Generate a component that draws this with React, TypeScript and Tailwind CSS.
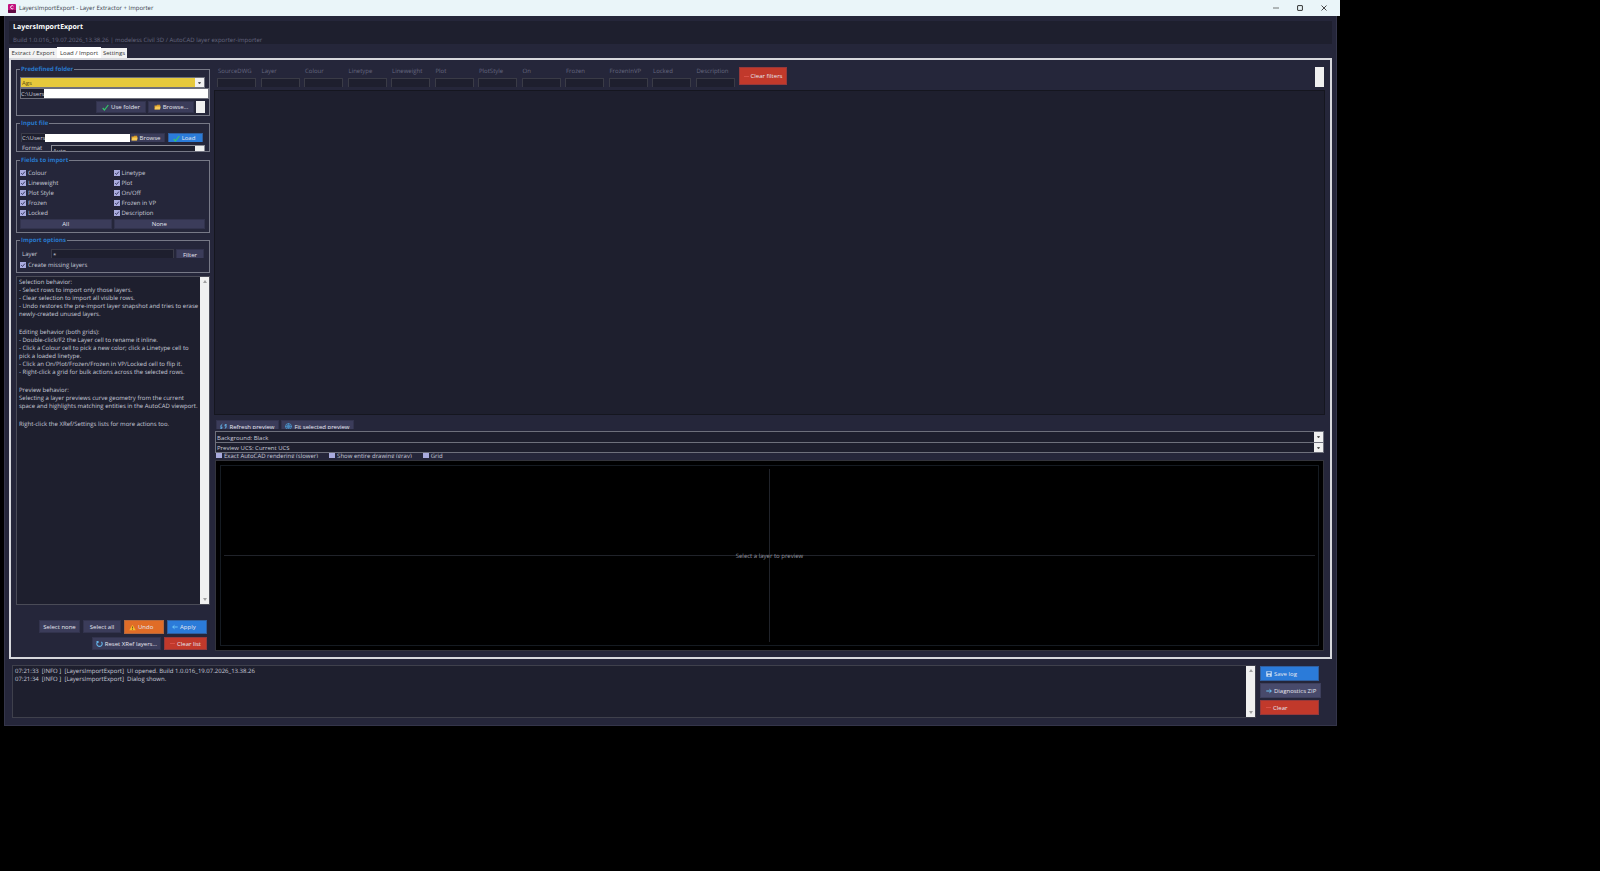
import { useState } from "react";
import type { ReactNode } from "react";
import clsx from "clsx";

const columns = ["SourceDWG", "Layer", "Colour", "Linetype", "Lineweight", "Plot", "PlotStyle", "On", "Frozen", "FrozenInVP", "Locked", "Description"];

const fields = ["Colour", "Linetype", "Lineweight", "Plot", "Plot Style", "On/Off", "Frozen", "Frozen in VP", "Locked", "Description"];

const tabs = [
  { name: "Extract / Export", width: "w-[48px]" },
  { name: "Load / Import", width: "w-[44px]" },
  { name: "Settings", width: "w-[26px]" },
];

const help = [
  ["Selection behavior:", "- Select rows to import only those layers.", "- Clear selection to import all visible rows.", "- Undo restores the pre-import layer snapshot and tries to erase", "newly-created unused layers."],
  ["Editing behavior (both grids):", "- Double-click/F2 the Layer cell to rename it inline.", "- Click a Colour cell to pick a new color; click a Linetype cell to", "pick a loaded linetype.", "- Click an On/Plot/Frozen/Frozen in VP/Locked cell to flip it.", "- Right-click a grid for bulk actions across the selected rows."],
  ["Preview behavior:", "Selecting a layer previews curve geometry from the current", "space and highlights matching entities in the AutoCAD viewport."],
  ["Right-click the XRef/Settings lists for more actions too."],
];

const log = [
  "07:21:33  [INFO ]  [LayersImportExport]  UI opened. Build 1.0.016_19.07.2026_13.38.26",
  "07:21:34  [INFO ]  [LayersImportExport]  Dialog shown.",
];

const tones = {
  plain: "bg-[#3b3c5a] border-[#32334d]",
  light: "bg-[#484a6b] border-[#3d3f5c]",
  blue: "bg-[#2b7bd9] border-[#2f5f9f]",
  red: "bg-[#c1392b] border-[#96383a]",
  orange: "bg-[#e06c27] border-[#b5683d]",
};

function Button({ tone = "plain", icon, className, children }: { tone?: keyof typeof tones; icon?: ReactNode; className?: string; children?: ReactNode }) {
  return (
    <button type="button" className={clsx("flex shrink-0 items-center gap-[2px] overflow-hidden border whitespace-nowrap text-[#e6e7f0]", tones[tone], className)}>
      {icon}
      {children}
    </button>
  );
}

function CheckIcon() {
  return (
    <svg viewBox="0 0 7 7" className="size-[7px] shrink-0" fill="none" stroke="#35c46a" strokeWidth="1.2">
      <path d="M.7 4 2.4 6 6.3 1" />
    </svg>
  );
}

function FolderIcon() {
  return (
    <svg viewBox="0 0 7 6" className="h-[6px] w-[7px] shrink-0">
      <path d="M.5 1.5h2l.7-.8h3v4.6H.5z" fill="#d99a27" />
      <path d="M1.5 2.4h5.2l-.8 3H.5z" fill="#f7cb58" />
    </svg>
  );
}

function WarnIcon() {
  return (
    <svg viewBox="0 0 7 7" className="size-[7px] shrink-0">
      <path d="M3.5.7 6.7 6.3H.3z" fill="#f5bd2c" />
      <path d="M3.5 2.5v2M3.5 5v.7" stroke="#54401c" strokeWidth=".8" />
    </svg>
  );
}

function ArrowIcon({ left = false }: { left?: boolean }) {
  return (
    <svg viewBox="0 0 6 6" className={clsx("size-[6px] shrink-0", left && "rotate-180")} fill="none" stroke="#6cc4f5" strokeWidth="1">
      <path d="M.3 3h5M3.5 1.3 5.3 3 3.5 4.7" />
    </svg>
  );
}

function SpinIcon() {
  return (
    <svg viewBox="0 0 7 7" className="size-[7px] shrink-0" fill="none" stroke="#63b3e8" strokeWidth="1.1">
      <path d="M1.6 1.8A2.7 2.7 0 1 0 5.4 1.8M.5 1.6h1.5v1.3" />
    </svg>
  );
}

function RefreshIcon() {
  return (
    <svg viewBox="0 0 7 7" className="size-[7px] shrink-0" fill="none" stroke="#63b3e8" strokeWidth="1">
      <path d="M2.3 1.2A2.6 2.6 0 0 0 1.5 5.2M.3 5.3h1.6V3.7M4.7 5.8a2.6 2.6 0 0 0 .8-4M6.7 1.7H5.1v1.6" />
    </svg>
  );
}

function TargetIcon() {
  return (
    <svg viewBox="0 0 7 7" className="size-[7px] shrink-0" fill="none" stroke="#4da3de" strokeWidth=".8">
      <circle cx="3.5" cy="3.5" r="2.9" />
      <circle cx="3.5" cy="3.5" r="1.3" />
      <path d="M3.5 0v7M0 3.5h7" strokeWidth=".5" />
    </svg>
  );
}

function DiskIcon() {
  return (
    <svg viewBox="0 0 6 6" className="size-[6px] shrink-0">
      <path d="M.3.3h5.4v5.4H.3z" fill="#d6e6f8" />
      <path d="M1.3.8h3.4v1.7H1.3z" fill="#2b6fc0" />
      <path d="M1.8 3.8h2.4v1.5H1.8z" fill="#4f87c8" />
    </svg>
  );
}

function MinusIcon() {
  return (
    <svg viewBox="0 0 5 5" className="size-[5px] shrink-0" stroke="#e0564b" strokeWidth=".8">
      <path d="M0 2.5h5" />
    </svg>
  );
}

function Check({ label, defaultChecked = false }: { label: string; defaultChecked?: boolean }) {
  return (
    <label className="flex items-center gap-[2px] whitespace-nowrap">
      <span className="grid shrink-0">
        <input type="checkbox" defaultChecked={defaultChecked} className="peer col-start-1 row-start-1 size-[6px] appearance-none bg-[#a9abde]" />
        <svg viewBox="0 0 6 6" className="pointer-events-none invisible col-start-1 row-start-1 size-[6px] peer-checked:visible" fill="none" stroke="#30325a" strokeWidth=".9">
          <path d="M1.2 3.1 2.5 4.5 4.9 1.6" />
        </svg>
      </span>
      {label}
    </label>
  );
}

function Group({ title, className, children }: { title: string; className?: string; children: ReactNode }) {
  return (
    <fieldset className={clsx("min-w-0 overflow-hidden border border-[#777987] pr-1 pl-[3px]", className)}>
      <legend className="px-px leading-[8px] font-bold text-[#2879cc]">{title}</legend>
      {children}
    </fieldset>
  );
}

function Select({ label, value, className }: { label: string; value: string; className?: string }) {
  return (
    <div className={clsx("flex min-w-0 border border-[#6e707c]", className)}>
      <select aria-label={label} className="min-w-0 flex-1 appearance-none px-px pt-px outline-none">
        <option>{value}</option>
      </select>
      <span className="flex w-[9px] shrink-0 items-center justify-center bg-[#f0f0f0]">
        <svg viewBox="0 0 3 2" className="h-[2px] w-[3px]" fill="#555"><path d="M0 0h3L2 2H1z" /></svg>
      </span>
    </div>
  );
}

function ScrollBar() {
  return (
    <div className="flex w-[9px] shrink-0 flex-col items-center justify-between bg-[#f0f0f0] py-[3px]">
      <svg viewBox="0 0 4 3" className="h-[3px] w-[4px]" fill="#a0a0a0"><path d="M0 3 2 0l2 3z" /></svg>
      <svg viewBox="0 0 4 3" className="h-[3px] w-[4px]" fill="#a0a0a0"><path d="M0 0h4L2 3z" /></svg>
    </div>
  );
}

function Sidebar() {
  return (
    <aside className="flex w-[194px] shrink-0 flex-col">
      <Group title="Predefined folder" className="h-[51px]">
        <Select label="Predefined folder" value="Ags" className="mt-[4px] h-[11px] bg-[#e6c93c] text-[#5b4c10]" />
        <div className="-mr-1 flex h-[11px] border border-[#6e707c]">
          <input aria-label="Folder path" defaultValue="C:\Users" className="w-[23px] bg-[#1e1f2e]" />
          <div className="flex-1 bg-white" />
        </div>
        <div className="mt-[2px] flex h-[12px] justify-end gap-[2px]">
          <Button icon={<CheckIcon />} className="w-[50px] justify-center">Use folder</Button>
          <Button icon={<FolderIcon />} className="w-[46px] justify-center">Browse...</Button>
          <div className="w-[9px] bg-[#f0f0f0]" />
        </div>
      </Group>

      <Group title="Input file" className="mt-[3px] h-[33px]">
        <div className="mt-[6px] flex h-[9px] items-stretch overflow-hidden pl-px">
          <input aria-label="Input file" defaultValue="C:\Users" className="w-[24px] border-t border-l border-[#3a3b48] bg-[#1e1f2e]" />
          <div className="mt-px w-[85px] bg-white" />
          <Button icon={<FolderIcon />} className="w-[35px] justify-center border-b-0 pr-[4px]">Browse</Button>
          <Button tone="blue" icon={<CheckIcon />} className="ml-[3px] w-[35px] justify-center border-b-0 pr-[3px]">Load</Button>
        </div>
        <div className="mt-[3px] flex h-[6px] overflow-hidden">
          <label htmlFor="format" className="w-[31px] pl-[2px] leading-[7px]">Format</label>
          <div className="flex h-[12px] min-w-0 flex-1 border border-[#8b8c96] bg-[#1e1f2e]">
            <select id="format" className="min-w-0 flex-1 appearance-none px-px"><option>Auto</option></select>
            <span className="w-[9px] bg-[#f0f0f0]" />
          </div>
        </div>
      </Group>

      <Group title="Fields to import" className="mt-[4px] h-[77px]">
        <div className="mt-[4px] grid grid-cols-2 gap-x-[2px]">
          {fields.map((name) => (
            <div key={name} className="flex h-[10px] items-center"><Check label={name} defaultChecked /></div>
          ))}
          <Button className="mt-px h-[10px] justify-center">All</Button>
          <Button className="mt-px h-[10px] justify-center">None</Button>
        </div>
      </Group>

      <Group title="Import options" className="mt-[3px] h-[37px]">
        <div className="mt-[5px] flex h-[9px] overflow-hidden">
          <label htmlFor="layer" className="w-[31px] pt-[2px] pl-[2px] leading-[7px]">Layer</label>
          <input id="layer" defaultValue="*" className="h-[12px] min-w-0 flex-1 border border-[#3a3b48] bg-[#1e1f2e] px-px" />
          <Button className="mr-px ml-[2px] h-[12px] w-[28px] justify-center">Filter</Button>
        </div>
        <div className="mt-[3px]"><Check label="Create missing layers" defaultChecked /></div>
      </Group>

      <div className="mt-[3px] flex min-h-0 flex-1 border border-[#4a4b57] bg-[#1e1f2e]">
        <div className="flex min-w-0 flex-1 flex-col gap-[10px] px-[2px] pt-px whitespace-nowrap">
          {help.map((lines) => (
            <div key={lines[0]}>
              {lines.map((line) => <p key={line}>{line}</p>)}
            </div>
          ))}
        </div>
        <ScrollBar />
      </div>

      <div className="mt-[15px] flex justify-end gap-[3px] pr-[3px]">
        <Button className="h-[13px] w-[41px] justify-center">Select none</Button>
        <Button className="h-[13px] w-[38px] justify-center">Select all</Button>
        <Button tone="orange" icon={<WarnIcon />} className="h-[14px] w-[40px] pl-[4px]">Undo</Button>
        <Button tone="blue" icon={<ArrowIcon left />} className="h-[14px] w-[40px] pl-[4px]">Apply</Button>
      </div>
      <div className="mt-[3px] mb-[7px] flex justify-end gap-[3px] pr-[3px]">
        <Button icon={<SpinIcon />} className="h-[13px] w-[69px] justify-center">Reset XRef layers...</Button>
        <Button tone="red" icon={<MinusIcon />} className="h-[13px] w-[43px] justify-center">Clear list</Button>
      </div>
    </aside>
  );
}

function Filters() {
  return (
    <div className="flex h-[25px] pt-[2px] pl-[3px]">
      <div className="grid w-[522px] grid-cols-12 text-[#666880]">
        {columns.map((name) => (
          <label key={name} className="flex h-[20px] flex-col justify-between whitespace-nowrap">
            <span className="pl-px">{name}</span>
            <input className="h-[9px] w-[39px] border border-b-0 border-[#3a3b46] bg-[#1e1f2e]" />
          </label>
        ))}
      </div>
      <Button tone="red" icon={<MinusIcon />} className="h-[18px] w-[48px] justify-center">Clear filters</Button>
      <div className="mr-px ml-auto h-[20px] w-[9px] bg-[#f0f0f0]" />
    </div>
  );
}

function Workspace() {
  return (
    <main className="flex min-w-0 flex-1 flex-col pr-[5px]">
      <Filters />
      <div className="h-[325px] border border-[#15161f] bg-[#1e1f2e]" />
      <div className="mt-[5px] ml-[2px] flex h-[9px] gap-[2px] overflow-hidden">
        <Button icon={<RefreshIcon />} className="h-[13px] w-[63px] justify-center">Refresh preview</Button>
        <Button icon={<TargetIcon />} className="h-[13px] w-[73px] justify-center">Fit selected preview</Button>
      </div>
      <div className="mt-[2px] mr-px ml-px">
        <Select label="Background" value="Background: Black" className="h-[12px] bg-[#1e1f2e]" />
        <Select label="Preview UCS" value="Preview UCS: Current UCS" className="h-[10px] border-t-0 bg-[#1e1f2e]" />
      </div>
      <div className="ml-[2px] flex h-[5px] items-center gap-[11px] overflow-hidden">
        <Check label="Exact AutoCAD rendering (slower)" />
        <Check label="Show entire drawing (gray)" />
        <Check label="Grid" />
      </div>
      <div className="mt-[2px] mr-px mb-[6px] ml-px flex flex-1 border border-[#33343c] bg-black p-[4px]">
        <div className="grid flex-1 place-items-center border border-[#151b22] p-[3px]">
          <div className="col-start-1 row-start-1 h-full w-px bg-[#20232a]" />
          <div className="col-start-1 row-start-1 h-px w-full bg-[#20232a]" />
          <p className="col-start-1 row-start-1 text-[#9697a0]">Select a layer to preview</p>
        </div>
      </div>
    </main>
  );
}

export default function App() {
  const [tab, setTab] = useState("Load / Import");

  return (
    <div className="min-h-screen bg-black pr-[260px] font-['Open_Sans','Noto_Sans',sans-serif] text-[6px] leading-[8px] text-[#c9cbd9] [text-rendering:geometricPrecision]">
      <header className="flex h-[16px] items-center bg-[#eaf5f9] pl-[8px] text-[#38404a]">
        <svg viewBox="0 0 8 9" className="mr-[3px] h-[9px] w-[8px]">
          <rect width="8" height="9" rx="1" fill="#c2127e" />
          <path d="M0 6h8v2a1 1 0 0 1-1 1H1a1 1 0 0 1-1-1z" fill="#5f0b43" />
          <path d="M5.4 2.2A1.6 1.6 0 1 0 5.4 4.3" stroke="#fff" strokeWidth=".9" fill="none" />
        </svg>
        <h1>LayersImportExport - Layer Extractor + Importer</h1>
        <div className="ml-auto flex gap-[18px] pr-[13px]">
          <button type="button" aria-label="Minimize">
            <svg viewBox="0 0 6 6" className="size-[6px]" stroke="#555" strokeWidth=".8"><path d="M0 3h6" /></svg>
          </button>
          <button type="button" aria-label="Maximize">
            <svg viewBox="0 0 6 6" className="size-[6px]" fill="none" stroke="#333" strokeWidth="1"><rect x=".6" y=".6" width="4.8" height="4.8" rx=".4" /></svg>
          </button>
          <button type="button" aria-label="Close">
            <svg viewBox="0 0 6 6" className="size-[6px]" stroke="#333" strokeWidth=".9"><path d="m.5.5 5 5m0-5-5 5" /></svg>
          </button>
        </div>
      </header>

      <div className="mr-[3px] ml-[4px] border border-t-0 border-[#34354a] bg-[#25263a] px-[4px] pt-[5px] pb-[7px]">
        <div className="h-[23px] bg-[#1e1f2e] pt-[3px] pl-[4px]">
          <h2 className="text-[7px] font-bold text-white">LayersImportExport</h2>
          <p className="mt-[4px] text-[#666880]">Build 1.0.016_19.07.2026_13.38.26 | modeless Civil 3D / AutoCAD layer exporter-importer</p>
        </div>

        <div role="tablist" className="mt-[3px] flex items-end text-[#333]">
          {tabs.map(({ name, width }) => (
            <button
              key={name}
              type="button"
              role="tab"
              aria-selected={tab === name}
              onClick={() => setTab(name)}
              className={clsx("whitespace-nowrap", width, tab === name ? "h-[11px] bg-white" : "h-[10px] bg-[#f3f3f3]")}
            >
              {name}
            </button>
          ))}
        </div>

        <div className="flex h-[601px] gap-[4px] border-2 border-[#d7d8dd] pt-[5px] pl-[5px]">
          <Sidebar />
          <Workspace />
        </div>

        <div className="mt-[6px] flex gap-[4px] pr-[11px] pl-[3px]">
          <div className="flex h-[53px] min-w-0 flex-1 border border-[#3f404c] bg-[#1e1f2e]">
            <div className="min-w-0 flex-1 px-[2px] pt-px whitespace-pre">
              {log.map((line) => <p key={line}>{line}</p>)}
            </div>
            <ScrollBar />
          </div>
          <div className="flex flex-col items-start gap-[2px] pt-px">
            <Button tone="blue" icon={<DiskIcon />} className="h-[15px] w-[59px] pl-[5px]">Save log</Button>
            <Button tone="light" icon={<ArrowIcon />} className="h-[15px] w-[61px] pl-[5px]">Diagnostics ZIP</Button>
            <Button tone="red" icon={<MinusIcon />} className="h-[15px] w-[59px] pl-[5px]">Clear</Button>
          </div>
        </div>
      </div>
    </div>
  );
}
